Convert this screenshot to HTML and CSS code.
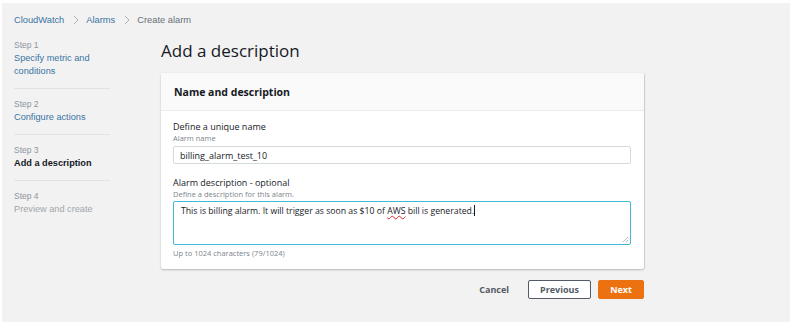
FILE: index.html
```html
<!DOCTYPE html>
<html>
  <head>
    <meta charset="UTF-8">
    <meta name="viewport" content="width=device-width, initial-scale=1.0">
    <title>Create alarm - CloudWatch</title>
    <link rel="stylesheet" href="styles.css">
  </head>
  <body>
    <div class="page">
      <!-- Breadcrumb -->
      <nav class="breadcrumb">
        <a href="#">CloudWatch</a>
        <span class="crumb-sep">
          <svg width="6" height="10" viewBox="0 0 6 10"><path d="M1 1l4 4-4 4" fill="none" stroke="#aab0b5" stroke-width="1"/></svg>
        </span>
        <a href="#">Alarms</a>
        <span class="crumb-sep">
          <svg width="6" height="10" viewBox="0 0 6 10"><path d="M1 1l4 4-4 4" fill="none" stroke="#aab0b5" stroke-width="1"/></svg>
        </span>
        <span class="crumb-current">Create alarm</span>
      </nav>

      <div class="layout">
        <!-- Wizard steps -->
        <ul class="steps">
          <li class="step">
            <div class="step-label">Step 1</div>
            <a class="step-name" href="#">Specify metric and conditions</a>
          </li>
          <li class="step">
            <div class="step-label">Step 2</div>
            <a class="step-name" href="#">Configure actions</a>
          </li>
          <li class="step active">
            <div class="step-label">Step 3</div>
            <div class="step-name">Add a description</div>
          </li>
          <li class="step disabled">
            <div class="step-label">Step 4</div>
            <div class="step-name">Preview and create</div>
          </li>
        </ul>

        <main class="content">
          <h1>Add a description</h1>

          <section class="card">
            <div class="card-header">Name and description</div>
            <div class="card-body">
              <div class="field">
                <label class="field-label">Define a unique name</label>
                <div class="field-hint">Alarm name</div>
                <input class="text-input" type="text" value="billing_alarm_test_10">
              </div>
              <div class="field">
                <label class="field-label">Alarm description - optional</label>
                <div class="field-hint">Define a description for this alarm.</div>
                <div class="textarea">This is billing alarm. It will trigger as soon as $10 of <span class="misspelled">AWS</span> bill is generated.<span class="caret"></span>
                  <svg class="resize-grip" width="7" height="7" viewBox="0 0 7 7"><path d="M6 1L1 6M6 4L4 6" stroke="#9aa" stroke-width="0.8"/></svg>
                </div>
                <div class="field-note">Up to 1024 characters (79/1024)</div>
              </div>
            </div>
          </section>

          <div class="actions">
            <button class="btn btn-link">Cancel</button>
            <button class="btn btn-normal">Previous</button>
            <button class="btn btn-primary">Next</button>
          </div>
        </main>
      </div>
    </div>
  </body>
</html>
```

FILE: styles.css
```css
/* Base */
* {
  box-sizing: border-box;
}
html {
  background: #fff;
}
body {
  margin: 0;
  padding: 3px 0 0 2px;
  font-family: 'Liberation Sans', Arial, sans-serif;
  color: #16191f;
}
.page {
  background: #f2f2f2;
  min-height: 319px;
  padding: 0 0 20px 12px;
}

/* Breadcrumb */
.breadcrumb {
  display: flex;
  align-items: center;
  height: 33px;
  font-size: 9.3px;
}
.breadcrumb a {
  color: #3a74a3;
  text-decoration: none;
}
.crumb-sep {
  display: flex;
  margin: 0 7px 0 9px;
}
.crumb-current {
  color: #687078;
}

/* Layout */
.layout {
  display: flex;
  align-items: flex-start;
  margin-top: 3px;
}

/* Steps sidebar */
.steps {
  list-style: none;
  margin: 0;
  padding: 0;
  width: 96px;
  flex-shrink: 0;
}
.step {
  padding: 9px 0 10px;
  border-bottom: 1px solid #dfe3e6;
}
.step:first-child {
  padding-top: 0;
}
.step:last-child {
  border-bottom: none;
}
.step-label {
  font-size: 8.5px;
  line-height: 13px;
  color: #8d969e;
}
.step-name {
  display: block;
  font-size: 9.2px;
  line-height: 13px;
  color: #3a74a3;
  text-decoration: none;
}
.step.active .step-name {
  color: #16191f;
  font-weight: bold;
}
.step.disabled .step-name {
  color: #a0a6ab;
}

/* Main column */
.content {
  width: 483px;
  margin-left: 51px;
  font-family: 'Open Sans', sans-serif;
}
h1 {
  margin: 0 0 10px;
  font-size: 17px;
  line-height: 24px;
  font-weight: 400;
  color: #16191f;
}

/* Card */
.card {
  background: #fff;
  border-radius: 2px;
  box-shadow: 0 1px 2px rgba(0, 28, 36, 0.25), 1px 0 1px rgba(0, 28, 36, 0.1);
}
.card-header {
  height: 38px;
  line-height: 38px;
  padding: 0 13px;
  background: #fafafa;
  border-bottom: 1px solid #eaeded;
  border-radius: 2px 2px 0 0;
  font-size: 10.5px;
  font-weight: 700;
}
.card-body {
  padding: 9px 13px 11px 12px;
}
.field + .field {
  margin-top: 12px;
}
.field-label {
  display: block;
  font-size: 9px;
  line-height: 13px;
  color: #16191f;
}
.field-hint,
.field-note {
  font-size: 7.5px;
  line-height: 10px;
  color: #7d858c;
}
.text-input {
  display: block;
  width: 100%;
  height: 18px;
  margin-top: 3px;
  padding: 0 6px;
  border: 1px solid #d5dbdb;
  border-radius: 2px;
  font-family: 'Open Sans', sans-serif;
  font-size: 9px;
  color: #16191f;
  outline: none;
}
.textarea {
  position: relative;
  height: 44px;
  margin-top: 2px;
  padding: 2px 7px;
  border: 1.5px solid #44b9d6;
  border-radius: 2px;
  font-size: 8.7px;
  line-height: 14px;
  color: #16191f;
}
.misspelled {
  text-decoration: underline wavy #e0252a;
  text-decoration-thickness: 0.7px;
  text-underline-offset: 1px;
}
.caret {
  display: inline-block;
  width: 1px;
  height: 11px;
  background: #16191f;
  vertical-align: -2px;
}
.resize-grip {
  position: absolute;
  right: 1px;
  bottom: 1px;
}
.field-note {
  margin-top: 3px;
}

/* Actions */
.actions {
  display: flex;
  justify-content: flex-end;
  align-items: center;
  gap: 7px;
  margin-top: 11px;
}
.btn {
  height: 19px;
  padding: 0;
  border-radius: 2px;
  font-family: 'Open Sans', sans-serif;
  font-size: 9px;
  font-weight: 700;
  line-height: 17px;
  cursor: pointer;
}
.btn-link {
  background: transparent;
  border: none;
  color: #545b64;
  padding: 0 12px;
}
.btn-normal {
  width: 63px;
  background: #fff;
  border: 1px solid #545b64;
  color: #545b64;
}
.btn-primary {
  width: 46px;
  background: #ec7211;
  border: 1px solid #ec7211;
  color: #fff;
}
```
